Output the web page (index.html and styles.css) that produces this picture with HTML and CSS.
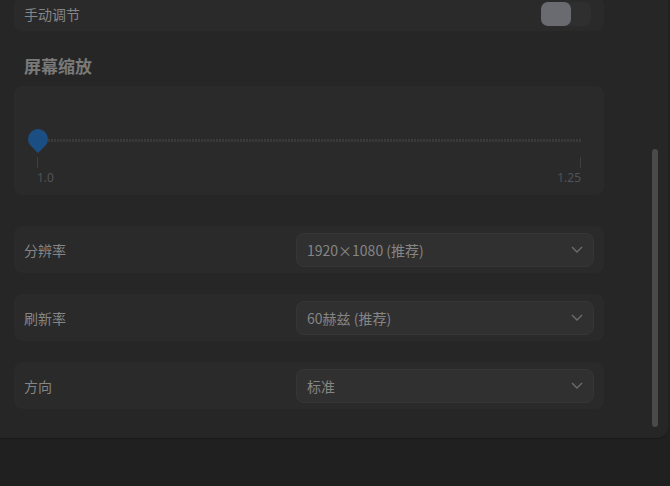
FILE: index.html
```html
<!DOCTYPE html>
<html lang="zh-CN">
<head>
<meta charset="utf-8">
<link rel="stylesheet" href="styles.css">
</head>
<body>
<div class="panel">
  <div class="content">
    <div class="card card-top">
      <span class="label">手动调节</span>
      <div class="toggle"><div class="thumb"></div></div>
    </div>
    <h2 class="heading">屏幕缩放</h2>
    <div class="card slider-card">
      <div class="slider">
        <svg class="handle" width="20" height="24" viewBox="0 0 20 24"><path d="M10 24 L2.5 16.5 Q0 14 0 10 A10 10 0 0 1 20 10 Q20 14 17.5 16.5 Z" fill="#1b4e82"/></svg>
        <div class="track"></div>
      </div>
      <div class="ticks">
        <div class="tick"><span class="mark"></span><span class="val">1.0</span></div>
        <div class="tick tick-end"><span class="mark"></span><span class="val">1.25</span></div>
      </div>
    </div>
    <div class="rows">
      <div class="card row">
        <span class="label">分辨率</span>
        <div class="combo"><span>1920×1080 (推荐)</span><svg width="12" height="7" viewBox="0 0 12 7"><path d="M1 1 L6 6 L11 1" fill="none" stroke="#6c6c6c" stroke-width="1.4"/></svg></div>
      </div>
      <div class="card row">
        <span class="label">刷新率</span>
        <div class="combo"><span>60赫兹 (推荐)</span><svg width="12" height="7" viewBox="0 0 12 7"><path d="M1 1 L6 6 L11 1" fill="none" stroke="#6c6c6c" stroke-width="1.4"/></svg></div>
      </div>
      <div class="card row">
        <span class="label">方向</span>
        <div class="combo"><span>标准</span><svg width="12" height="7" viewBox="0 0 12 7"><path d="M1 1 L6 6 L11 1" fill="none" stroke="#6c6c6c" stroke-width="1.4"/></svg></div>
      </div>
    </div>
  </div>
  <div class="scrollbar"></div>
</div>
</body>
</html>
```
FILE: styles.css
```css
* { box-sizing: border-box; }
html, body {
  margin: 0;
  padding: 0;
  background: #202020;
  width: 670px;
  height: 486px;
  overflow: hidden;
  font-family: "Noto Sans CJK SC", "Noto Sans", sans-serif;
}
.panel {
  position: relative;
  width: 669px;
  height: 439px;
  background: #262626;
  border-bottom-right-radius: 12px;
  border-bottom: 1px solid #1a1a1a;
  border-right: 1px solid #222;
  overflow: hidden;
}
.content {
  width: 604px;
  padding-left: 14px;
}
.card {
  background: #2a2a2a;
  border-radius: 8px;
}
.card-top {
  margin-top: -3px;
  height: 34px;
  display: flex;
  align-items: center;
  justify-content: space-between;
  padding: 0 13px 0 10px;
}
.label {
  font-size: 14px;
  color: #858585;
}
.toggle {
  width: 50px;
  height: 24px;
  border-radius: 7px;
  background: #2f2f2f;
  display: flex;
}
.thumb {
  width: 30px;
  height: 24px;
  border-radius: 7px;
  background: #6a6b70;
}
.heading {
  margin: 0;
  padding: 23px 0 0 10px;
  height: 55px;
  font-size: 17px;
  font-weight: 700;
  line-height: 24px;
  color: #7a7a7a;
}
.slider-card {
  height: 109px;
  padding: 43px 23px 0 14px;
}
.slider {
  display: flex;
  align-items: center;
  height: 24px;
}
.handle { display: block; flex: none; margin-bottom: 1px; }
.track {
  flex: 1;
  height: 3px;
  margin-bottom: 1px;
  background: repeating-linear-gradient(90deg, #3a3a3a 0 2px, transparent 2px 3px);
}
.ticks {
  display: flex;
  justify-content: space-between;
  margin-top: 4px;
  padding-left: 9px;
}
.tick {
  display: flex;
  flex-direction: column;
  align-items: flex-start;
}
.tick-end { align-items: flex-end; }
.mark {
  width: 1px;
  height: 11px;
  background: #3f3f3f;
}
.val {
  font-family: "Noto Sans", sans-serif;
  font-size: 12px;
  line-height: 20px;
  color: #505357;
}
.rows {
  margin-top: 31px;
  display: flex;
  flex-direction: column;
  gap: 21px;
}
.row {
  height: 47px;
  display: flex;
  align-items: center;
  justify-content: space-between;
  padding: 0 10px;
}
.combo {
  width: 298px;
  height: 34px;
  border-radius: 8px;
  background: #303030;
  border: 1px solid #363636;
  display: flex;
  align-items: center;
  justify-content: space-between;
  padding: 0 10px 0 10px;
  font-size: 14px;
  color: #858585;
}
.scrollbar {
  position: absolute;
  left: 652px;
  top: 149px;
  width: 6px;
  height: 278px;
  border-radius: 3px;
  background: #4a4a4a;
}
```
